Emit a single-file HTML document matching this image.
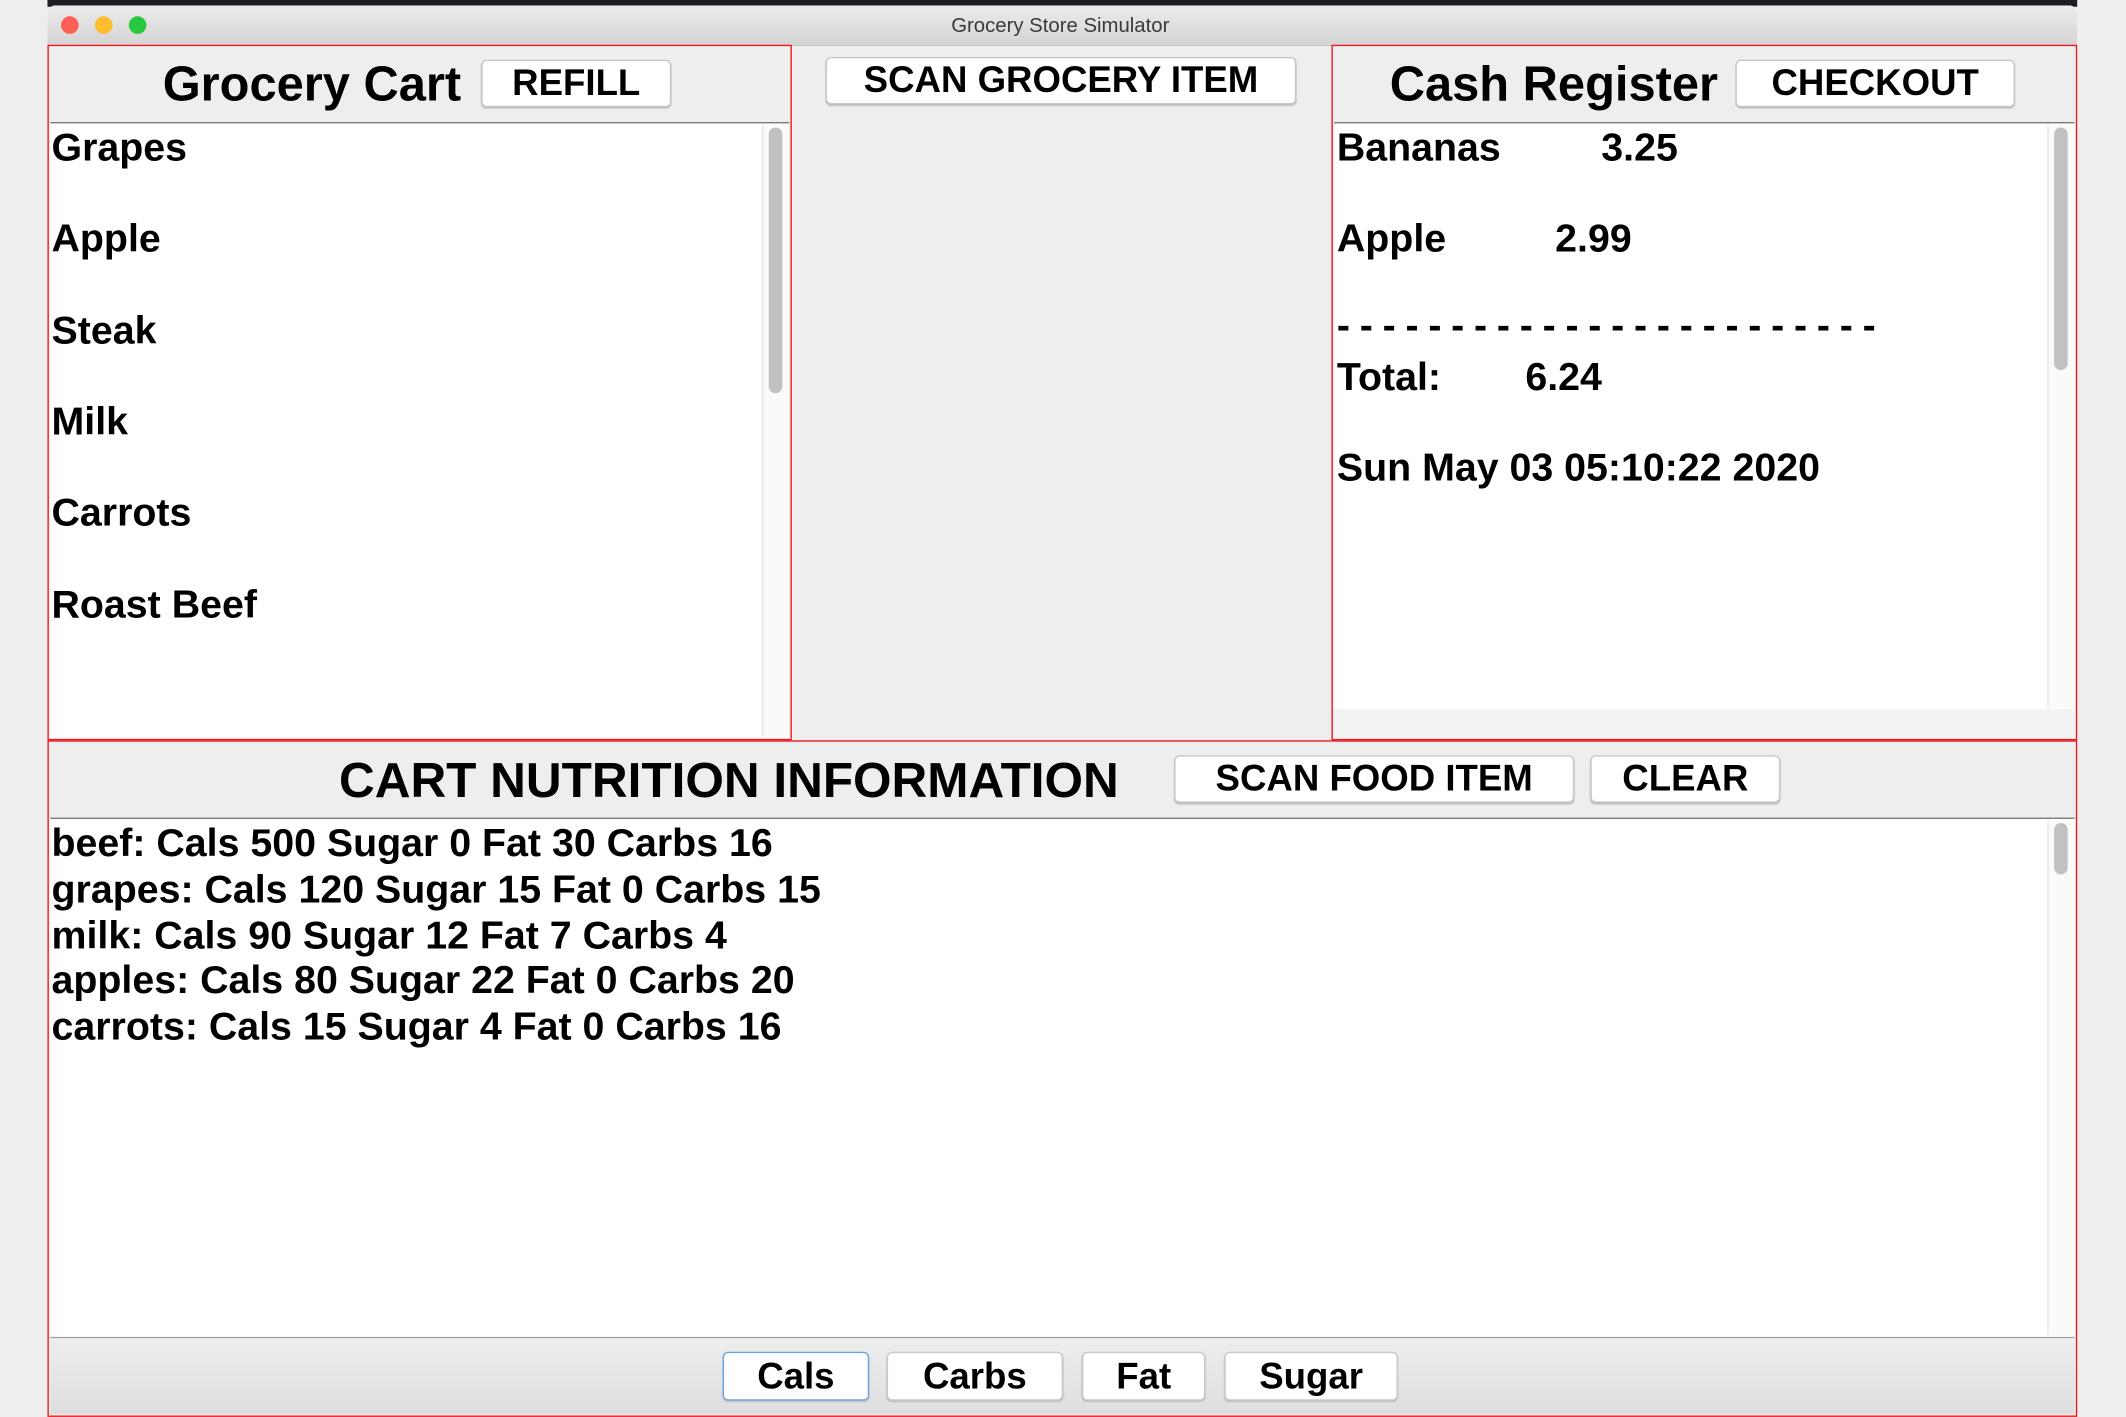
<!DOCTYPE html>
<html><head><meta charset="utf-8"><style>
html,body{margin:0;padding:0;background:#eeeeee;overflow:hidden;width:2126px;height:1417px}
#s{position:absolute;left:0;top:0;width:1568px;height:1045px;transform:scale(1.35587);transform-origin:0 0;font-family:"Liberation Sans",sans-serif;font-weight:bold;color:#000}
.a{position:absolute}
.t{position:absolute;white-space:nowrap;line-height:1;transform:translateY(-50%)}
.btn{position:absolute;background:#fff;border:1px solid #c8c8c8;border-radius:4px;box-shadow:0 1px 1px #bbb;display:flex;align-items:center;justify-content:center;font-size:27px;box-sizing:border-box}
.red{position:absolute;border:1.5px solid #f0141b;box-sizing:border-box}
.ta{position:absolute;background:#fff;border-top:1.5px solid #777}
.sb{position:absolute;background:#fafafa;border-left:1px solid #e6e6e6}
.th{position:absolute;background:#c1c1c1;border-radius:5px}
.it{font-size:29px}
</style></head><body><div id="s">
<div class="a" style="left:35px;top:0;width:1497px;height:5px;background:#1b1d23"></div>
<div class="a" style="left:35px;top:4px;width:1497px;height:29px;background:linear-gradient(#ececec,#d4d4d4);border-radius:6px 6px 0 0;border-bottom:1px solid #c4c4c4"></div>
<div class="a" style="left:45px;top:12px;width:13px;height:13px;border-radius:50%;background:#fe5f57"></div>
<div class="a" style="left:70px;top:12px;width:13px;height:13px;border-radius:50%;background:#febc2e"></div>
<div class="a" style="left:95px;top:12px;width:13px;height:13px;border-radius:50%;background:#28c840"></div>
<div class="t" style="left:0;width:1564px;text-align:center;top:19px;font-size:15px;font-weight:normal;color:#3a3a3a">Grocery Store Simulator</div>

<div class="red" style="left:35px;top:33px;width:549px;height:513px"></div>
<div class="t" style="left:120px;top:62px;font-size:36px">Grocery Cart</div>
<div class="btn" style="left:355px;top:44px;width:140px;height:35px">REFILL</div>
<div class="ta" style="left:37px;top:90px;width:545px;height:453px"></div>
<div class="sb" style="left:562px;top:92px;width:19px;height:451px"></div>
<div class="th" style="left:567px;top:94px;width:10px;height:196px"></div>
<div class="t it" style="left:38px;top:110px">Grapes</div>
<div class="t it" style="left:38px;top:177px">Apple</div>
<div class="t it" style="left:38px;top:245px">Steak</div>
<div class="t it" style="left:38px;top:312px">Milk</div>
<div class="t it" style="left:38px;top:379px">Carrots</div>
<div class="t it" style="left:38px;top:447px">Roast Beef</div>

<div class="btn" style="left:609px;top:42px;width:347px;height:35px">SCAN GROCERY ITEM</div>

<div class="red" style="left:982px;top:33px;width:550px;height:513px"></div>
<div class="t" style="left:1025px;top:62px;font-size:36px">Cash Register</div>
<div class="btn" style="left:1280px;top:44px;width:206px;height:35px">CHECKOUT</div>
<div class="a" style="left:984px;top:522px;width:546px;height:22px;background:#f3f3f3"></div>
<div class="ta" style="left:984px;top:90px;width:546px;height:432px"></div>
<div class="sb" style="left:1510px;top:92px;width:19px;height:430px"></div>
<div class="th" style="left:1515px;top:94px;width:10px;height:179px"></div>
<div class="t it" style="left:986px;top:110px">Bananas</div>
<div class="t it" style="left:1181px;top:110px">3.25</div>
<div class="t it" style="left:986px;top:177px">Apple</div>
<div class="t it" style="left:1147px;top:177px">2.99</div>
<div class="t it" style="left:986px;top:241px;letter-spacing:7.2px">------------------------</div>
<div class="t it" style="left:986px;top:279px">Total:</div>
<div class="t it" style="left:1125px;top:279px">6.24</div>
<div class="t it" style="left:986px;top:346px">Sun May 03 05:10:22 2020</div>

<div class="red" style="left:35px;top:546px;width:1497px;height:499px"></div>
<div class="t" style="left:250px;top:576px;font-size:36.5px">CART NUTRITION INFORMATION</div>
<div class="btn" style="left:866px;top:557px;width:295px;height:35px">SCAN FOOD ITEM</div>
<div class="btn" style="left:1173px;top:557px;width:140px;height:35px">CLEAR</div>
<div class="ta" style="left:37px;top:603px;width:1493px;height:382px;border-bottom:1.5px solid #999"></div>
<div class="sb" style="left:1510px;top:605px;width:19px;height:380px"></div>
<div class="th" style="left:1515px;top:607px;width:10px;height:38px"></div>
<div class="t it" style="left:38px;top:623px">beef: Cals 500 Sugar 0 Fat 30 Carbs 16</div>
<div class="t it" style="left:38px;top:657px">grapes: Cals 120 Sugar 15 Fat 0 Carbs 15</div>
<div class="t it" style="left:38px;top:691px">milk: Cals 90 Sugar 12 Fat 7 Carbs 4</div>
<div class="t it" style="left:38px;top:724px">apples: Cals 80 Sugar 22 Fat 0 Carbs 20</div>
<div class="t it" style="left:38px;top:758px">carrots: Cals 15 Sugar 4 Fat 0 Carbs 16</div>
<div class="a" style="left:37px;top:987px;width:1493px;height:56px;background:linear-gradient(#eeeeee,#dedede)"></div>
<div class="btn" style="left:533px;top:997px;width:108px;height:36px;border:1.5px solid #6aa5e6">Cals</div>
<div class="btn" style="left:654px;top:997px;width:130px;height:36px">Carbs</div>
<div class="btn" style="left:798px;top:997px;width:91px;height:36px">Fat</div>
<div class="btn" style="left:903px;top:997px;width:128px;height:36px">Sugar</div>
</div></body></html>
